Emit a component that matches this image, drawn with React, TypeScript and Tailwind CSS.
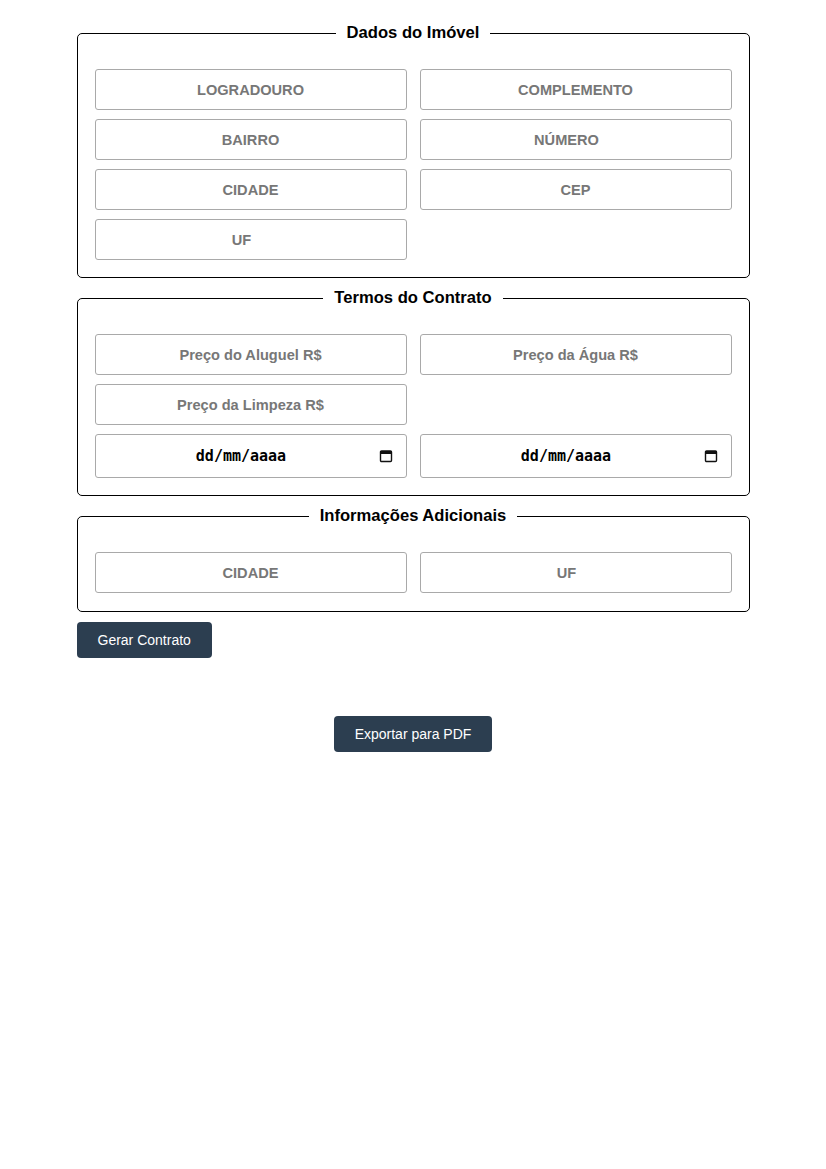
import React from "react"

function Field({ placeholder, spin }: { placeholder: string; spin?: boolean }) {
  return (
    <input
      placeholder={placeholder}
      className={
        "h-[41px] w-full rounded-[3px] border border-[#a9a9a9] bg-white pl-2 text-center text-[14.6px] font-bold text-[#333] placeholder:text-[#777] " +
        (spin ? "pr-[26px]" : "pr-2")
      }
    />
  )
}

function DateField() {
  return (
    <div className="flex h-[44px] w-full items-center rounded-[3px] border border-[#a9a9a9] bg-white pl-[8px] pr-[13px]">
      <span className="flex-1 text-center font-['DejaVu_Sans_Mono',monospace] text-[15px] font-bold text-black">dd/mm/aaaa</span>
      <svg width="14" height="14" viewBox="0 0 14 14" className="shrink-0">
        <rect x="1.5" y="2" width="11" height="10.5" rx="1" fill="none" stroke="#111" strokeWidth="1.4" />
        <rect x="1.5" y="2" width="11" height="3" fill="#111" />
      </svg>
    </div>
  )
}

function Section({ title, last, children }: { title: string; last?: boolean; children: React.ReactNode }) {
  return (
    <fieldset
      className={
        "mb-[9px] rounded-[5px] border border-black px-[17px] pt-[25px] " + (last ? "pb-[18px]" : "pb-[17px]")
      }
    >
      <legend className="mx-auto px-[11px] text-[16.6px] font-bold leading-[22px] text-black">{title}</legend>
      <div className="grid grid-cols-2 gap-x-[13px] gap-y-[9px]">{children}</div>
    </fieldset>
  )
}

export default function App() {
  return (
    <div className="min-h-[1169px] bg-white pt-[22px] font-['Liberation_Sans',Arial,sans-serif]">
      <div className="mx-auto w-[673px]">
        <Section title="Dados do Imóvel">
          <Field placeholder="LOGRADOURO" />
          <Field placeholder="COMPLEMENTO" />
          <Field placeholder="BAIRRO" />
          <Field placeholder="NÚMERO" spin />
          <Field placeholder="CIDADE" />
          <Field placeholder="CEP" />
          <Field placeholder="UF" spin />
        </Section>

        <Section title="Termos do Contrato">
          <Field placeholder="Preço do Aluguel R$" />
          <Field placeholder="Preço da Água R$" />
          <Field placeholder="Preço da Limpeza R$" />
          <div />
          <DateField />
          <DateField />
        </Section>

        <Section title="Informações Adicionais" last>
          <Field placeholder="CIDADE" />
          <Field placeholder="UF" spin />
        </Section>

        <button className="mt-px h-[36px] rounded-[4px] bg-[#2c3e50] px-[21px] text-[14px] text-white">
          Gerar Contrato
        </button>

        <div className="mt-[58px] flex justify-center">
          <button className="h-[36px] rounded-[4px] bg-[#2c3e50] px-[21px] text-[14px] text-white">
            Exportar para PDF
          </button>
        </div>
      </div>
    </div>
  )
}
